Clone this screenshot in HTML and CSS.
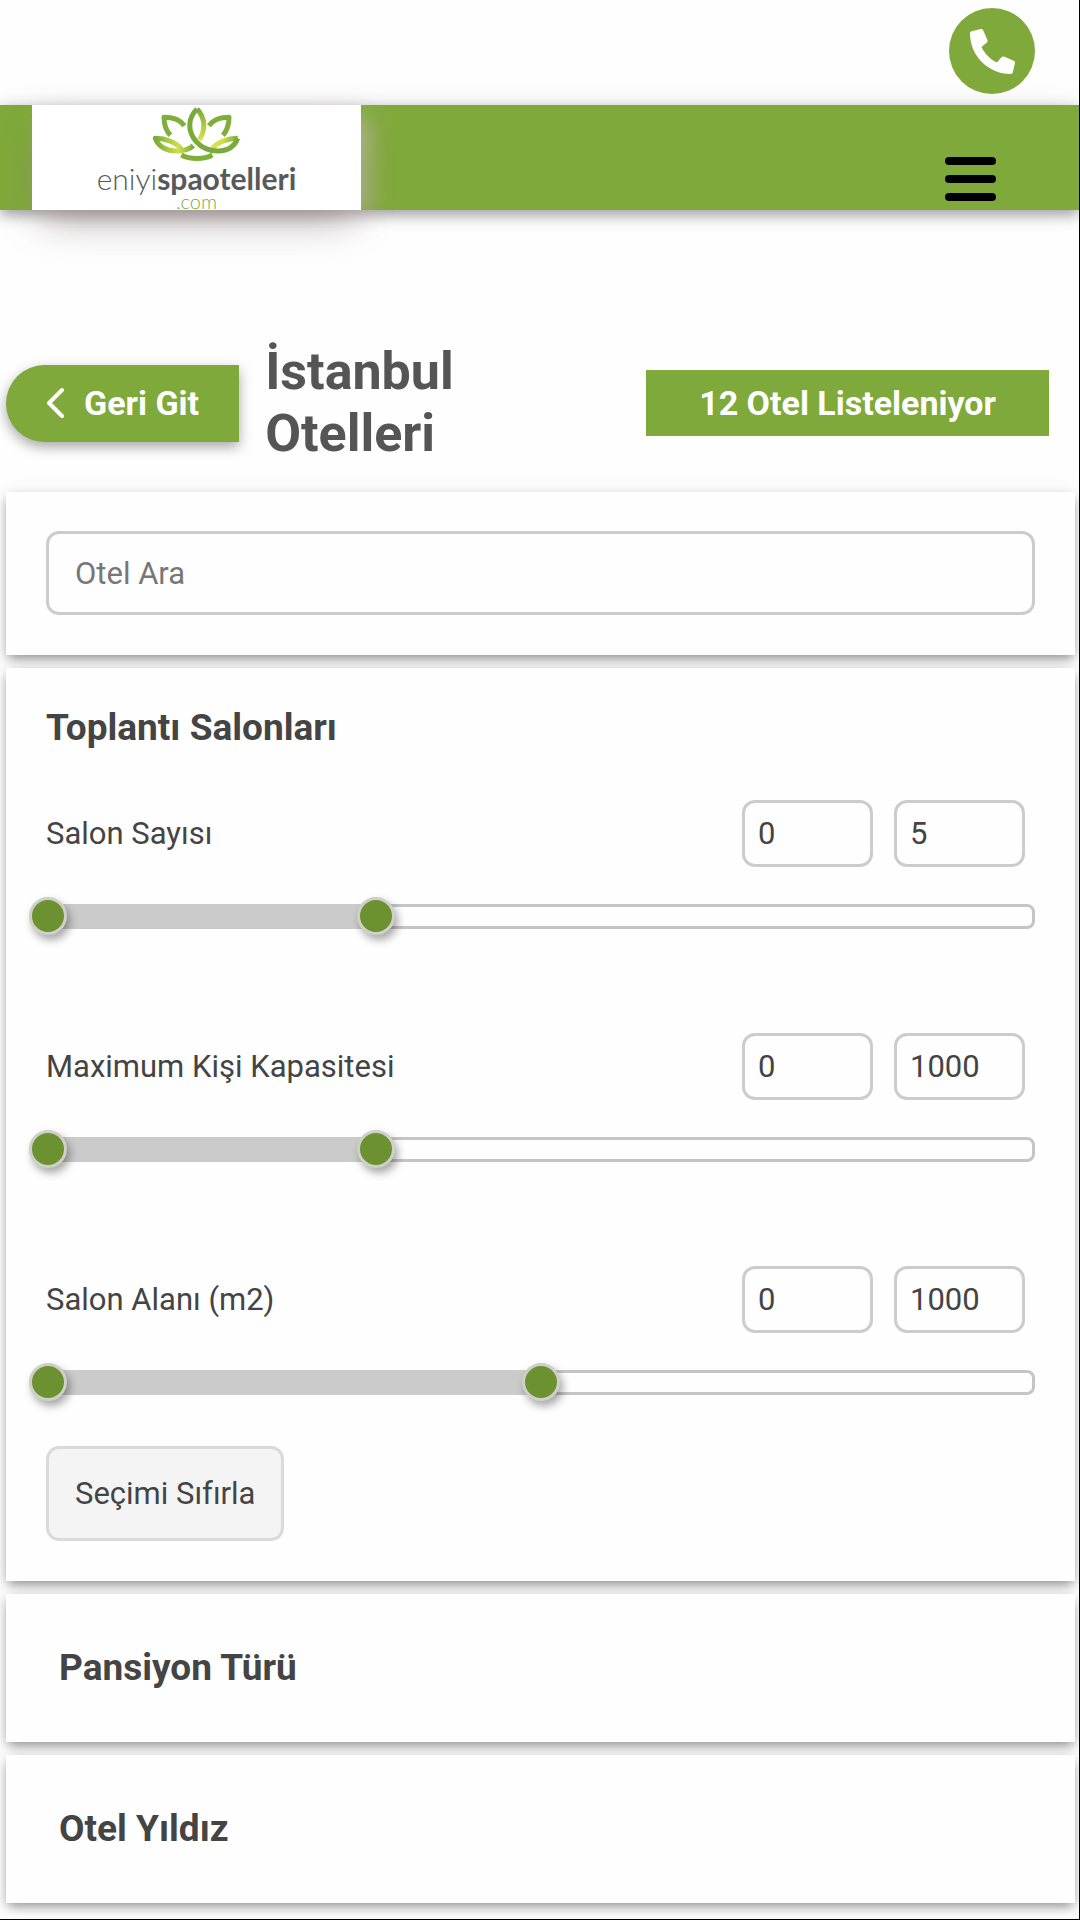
FILE: index.html
```html
<!DOCTYPE html>
<html lang="tr">
<head>
    <meta charset="UTF-8">
    <meta name="viewport" content="width=device-width, initial-scale=1.0">
    <title>İstanbul Otelleri</title>
    <link rel="stylesheet" href="styles.css">
</head>
<body>

<div class="topbar">
    <a href="#" class="phone-button" aria-label="Telefon">
        <svg viewBox="0 0 512 512" width="45" height="45" fill="#fff">
            <g transform="translate(512 0) scale(-1 1)">
                <path d="M493.4 24.6l-104-24c-11.3-2.6-22.9 3.3-27.5 13.9l-48 112c-4.2 9.8-1.4 21.3 6.9 28l60.6 49.6c-36 76.7-98.9 140.5-177.2 177.2l-49.6-60.6c-6.8-8.3-18.2-11.1-28-6.9l-112 48C3.9 366.5-2 378.1.6 389.4l24 104C27.1 504.2 36.7 512 48 512c256.1 0 464-207.5 464-464 0-11.2-7.7-20.9-18.6-23.4z"/>
            </g>
        </svg>
    </a>
</div>

<header class="header">
    <a href="#" class="logo">
        <svg class="logo-icon" viewBox="453 75 276 174" width="92" height="58" fill="none" stroke-width="15" stroke-linecap="butt" stroke-linejoin="round">
            <defs>
                <linearGradient id="leafLeft" x1="0" y1="0" x2="1" y2="0">
                    <stop offset="0" stop-color="#7aab3a"/>
                    <stop offset="0.6" stop-color="#cfdf4a"/>
                    <stop offset="1" stop-color="#7aab3a"/>
                </linearGradient>
                <linearGradient id="leafRight" x1="0" y1="0" x2="1" y2="0">
                    <stop offset="0" stop-color="#d8e34c"/>
                    <stop offset="0.4" stop-color="#cfdf4a"/>
                    <stop offset="1" stop-color="#7aab3a"/>
                </linearGradient>
                <linearGradient id="petal" x1="0" y1="0" x2="0" y2="1">
                    <stop offset="0" stop-color="#7aab3a"/>
                    <stop offset="1" stop-color="#d8e34c"/>
                </linearGradient>
            </defs>
            <path stroke="#7fae3b" d="M553 137C540 119 515 112 492 112C492 132 496 150 511 166"/>
            <path stroke="#7fae3b" d="M627 137C640 119 665 112 687 112C687 132 683 150 669 166"/>
            <path stroke="url(#leafLeft)" d="M543 207C530 188 498 175 466 175C474 200 500 213 530 213C552 213 568 208 580 197"/>
            <path stroke="url(#leafRight)" d="M636 207C650 188 682 175 713 175"/>
            <path stroke="url(#petal)" d="M591 87C617 115 617 150 598 180"/>
            <path stroke="#7aab3a" d="M591 87C562 115 563 155 588 184C607 206 630 213 655 213C685 213 706 197 713 175"/>
            <path stroke="#7fae3b" d="M544 225C570 239 612 239 637 225"/>
        </svg>
        <span class="logo-name">eniyi<b>spaotelleri</b></span>
        <span class="logo-domain">.com</span>
    </a>
    <button class="menu-button" aria-label="Menü">
        <span></span>
        <span></span>
        <span></span>
    </button>
</header>

<main>
    <div class="page-title">
        <a href="#" class="back-button">
            <svg viewBox="0 0 18 32" width="18" height="32" fill="none" stroke="#fff" stroke-width="4" stroke-linecap="round" stroke-linejoin="round">
                <path d="M16 3L3 16L16 29"/>
            </svg>
            Geri Git
        </a>
        <h1>İstanbul Otelleri</h1>
        <span class="hotel-count">12 Otel Listeleniyor</span>
    </div>

    <section class="card">
        <input type="text" class="search-input" placeholder="Otel Ara" aria-label="Otel Ara">
    </section>

    <section class="card">
        <h2>Toplantı Salonları</h2>

        <div class="filter">
            <div class="filter-row">
                <label for="salon-min">Salon Sayısı</label>
                <input type="text" id="salon-min" value="0">
                <input type="text" value="5" aria-label="Salon Sayısı en çok">
            </div>
            <div class="slider">
                <div class="slider-range" style="width: 33.33%"></div>
                <input type="range" min="0" max="15" value="0" aria-label="Salon Sayısı alt sınır">
                <input type="range" min="0" max="15" value="5" aria-label="Salon Sayısı üst sınır">
            </div>
        </div>

        <div class="filter">
            <div class="filter-row">
                <label for="kisi-min">Maximum Kişi Kapasitesi</label>
                <input type="text" id="kisi-min" value="0">
                <input type="text" value="1000" aria-label="Maximum Kişi Kapasitesi en çok">
            </div>
            <div class="slider">
                <div class="slider-range" style="width: 33.33%"></div>
                <input type="range" min="0" max="3000" value="0" aria-label="Kişi Kapasitesi alt sınır">
                <input type="range" min="0" max="3000" value="1000" aria-label="Kişi Kapasitesi üst sınır">
            </div>
        </div>

        <div class="filter">
            <div class="filter-row">
                <label for="alan-min">Salon Alanı (m2)</label>
                <input type="text" id="alan-min" value="0">
                <input type="text" value="1000" aria-label="Salon Alanı en çok">
            </div>
            <div class="slider">
                <div class="slider-range" style="width: 50%"></div>
                <input type="range" min="0" max="2000" value="0" aria-label="Salon Alanı alt sınır">
                <input type="range" min="0" max="2000" value="1000" aria-label="Salon Alanı üst sınır">
            </div>
        </div>

        <button class="reset-button">Seçimi Sıfırla</button>
    </section>

    <section class="card card-closed">
        <h2>Pansiyon Türü</h2>
    </section>

    <section class="card card-closed">
        <h2>Otel Yıldız</h2>
    </section>
</main>

</body>
</html>
```

FILE: styles.css
```css
* {
    box-sizing: border-box;
}
body {
    margin: 0;
    min-height: 100vh;
    background-color: #fefefe;
    border-right: 1px solid #000;
    border-bottom: 1px solid #000;
    font-family: Roboto, "Liberation Sans", sans-serif;
    font-size: 31px;
    color: #444;
    overflow-x: hidden;
}
a {
    text-decoration: none;
}
input,
button {
    font-family: inherit;
    font-size: inherit;
    color: inherit;
}

/* Header */
.topbar {
    display: flex;
    justify-content: flex-end;
    padding: 8px 44px 11px 0;
}
.phone-button {
    display: flex;
    align-items: center;
    justify-content: center;
    width: 86px;
    height: 86px;
    border-radius: 50%;
    background-color: #80a93b;
}
.header {
    display: flex;
    justify-content: space-between;
    height: 105px;
    padding: 0 83px 0 32px;
    background-color: #80a93b;
    box-shadow: 0 5px 13px rgba(0, 0, 0, 0.35), 0 0 26px rgba(0, 0, 0, 0.08);
}
.logo {
    display: flex;
    flex-direction: column;
    align-items: center;
    width: 329px;
    overflow: hidden;
    background-color: #fff;
    box-shadow: 0 21px 40px -10px rgba(105, 92, 92, 0.4), 10px 8px 24px -4px rgba(215, 195, 200, 0.7);
}
.logo-icon {
    flex: none;
}
.logo-name {
    font-family: Lato, sans-serif;
    font-weight: 300;
    font-size: 30px;
    line-height: 30px;
    color: #58595b;
}
.logo-name b {
    font-weight: 700;
}
.logo-domain {
    font-family: Lato, sans-serif;
    font-weight: 300;
    font-size: 20px;
    line-height: 17px;
    color: #80a93b;
}
.menu-button {
    display: flex;
    flex-direction: column;
    gap: 10px;
    align-self: flex-end;
    padding: 0;
    margin-bottom: 9px;
    border: none;
    background: none;
    cursor: pointer;
}
.menu-button span {
    width: 51px;
    height: 8px;
    border-radius: 4px;
    background-color: #000;
}

/* Title row */
.page-title {
    display: flex;
    align-items: center;
    padding: 131px 30px 27px 6px;
}
.back-button {
    display: flex;
    align-items: center;
    flex: none;
    gap: 20px;
    height: 77px;
    padding: 0 40px;
    border-radius: 39px 0 0 39px;
    background-color: #80a93b;
    box-shadow: 0 5px 13px rgba(0, 0, 0, 0.35);
    color: #fff;
    font-size: 34px;
    font-weight: 700;
}
h1 {
    flex: 1;
    margin: 0 80px 0 26px;
    font-size: 52px;
    line-height: 62px;
    font-weight: 700;
    color: #555;
}
.hotel-count {
    flex: none;
    padding: 0 53px;
    background-color: #80a93b;
    color: #fff;
    font-size: 34px;
    line-height: 66px;
    font-weight: 700;
}

/* Filter cards */
.card {
    margin: 0 4px 13px 6px;
    padding: 39px 40px 40px;
    background-color: #fefefe;
    box-shadow: 0 5px 10px -2px rgba(0, 0, 0, 0.4), 0 2px 20px rgba(0, 0, 0, 0.1);
}
.card:last-child {
    margin-bottom: 15px;
}
.search-input {
    display: block;
    width: 100%;
    height: 84px;
    padding: 0 26px;
    border: 3px solid #ccc;
    border-radius: 13px;
    background-color: #fefefe;
}
.search-input::placeholder {
    color: #777;
}
h2 {
    margin: 0;
    font-size: 37px;
    line-height: 42px;
    font-weight: 700;
}
.filter {
    margin: 51px 0;
}
.filter + .filter {
    margin-top: 104px;
}
.filter-row {
    display: flex;
    align-items: center;
    gap: 21px;
    padding-right: 10px;
}
.filter-row label {
    flex: 1;
}
.filter-row input {
    width: 131px;
    height: 67px;
    padding: 0 13px;
    border: 3px solid #ccc;
    border-radius: 13px;
    background-color: #fefefe;
}
.slider {
    position: relative;
    height: 25px;
    margin-top: 37px;
    border: 3px solid #c5c5c5;
    border-radius: 8px;
}
.slider-range {
    height: 25px;
    margin-top: -3px;
    background-color: #cbcbcb;
}
/* Two range inputs share one track */
.slider input {
    position: absolute;
    top: -10px;
    left: -20px;
    width: calc(100% + 40px);
    height: 38px;
    margin: 0;
    background: none;
    appearance: none;
    -webkit-appearance: none;
    pointer-events: none;
}
.slider input::-webkit-slider-thumb {
    -webkit-appearance: none;
    width: 38px;
    height: 38px;
    border: 3px solid #ccd0c6;
    border-radius: 50%;
    background-color: #6b9130;
    box-shadow: 3px 5px 8px rgba(0, 0, 0, 0.35);
    pointer-events: auto;
    cursor: pointer;
}
.reset-button {
    display: block;
    height: 95px;
    padding: 0 26px;
    border: 3px solid #dadada;
    border-radius: 13px;
    background-color: #f4f4f4;
    cursor: pointer;
}
.card-closed {
    padding: 53px;
}
```
